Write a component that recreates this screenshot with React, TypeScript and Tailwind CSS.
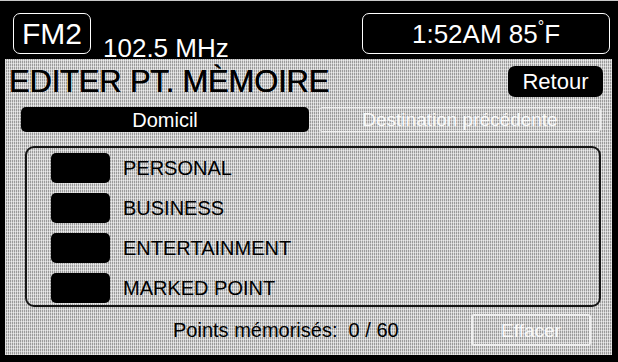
import React from "react";

const dither =
  "bg-[#c8c8c8] bg-[image:repeating-linear-gradient(0deg,rgba(255,255,255,0.45)_0px,rgba(255,255,255,0.45)_1px,transparent_1px,transparent_3px),repeating-linear-gradient(90deg,#9a9a9a_0px,#9a9a9a_1px,#dadada_1px,#dadada_2px)]";

const rows = ["PERSONAL", "BUSINESS", "ENTERTAINMENT", "MARKED POINT"];

export default function App() {
  return (
    <div className="w-[618px] h-[362px] bg-black flex flex-col border-t border-[#c8c8c8] font-['Liberation_Sans',Arial,sans-serif] overflow-hidden">
      {/* Top bar */}
      <div className="h-[58px] flex items-start pt-[12px] pl-[13px] pr-[8px] shrink-0">
        <div className="w-[78px] h-[41px] border-[1.5px] border-white rounded-[7px] flex items-center justify-center text-white text-[30px] leading-none pt-[1px]">
          FM2
        </div>
        <div className="ml-[12px] mt-[22px] text-white text-[26px] leading-none">102.5 MHz</div>
        <div className="ml-auto w-[248px] h-[41px] border-[1.5px] border-white rounded-[7px] flex items-center justify-center text-white text-[26px] leading-none">
          1:52AM 85<span className="relative -top-[7px] text-[16px]">°</span>F
        </div>
      </div>

      {/* Content */}
      <div className={`ml-[5px] mr-[6px] h-[296px] flex flex-col border-l border-[#e0e0e0] ${dither}`}>
        <div className="flex items-start justify-between pt-[7px]">
          <div className="pl-[3px] text-[31px] leading-none text-black tracking-[-0.2px] [text-shadow:0_0_0.4px_#000]">EDITER PT. MÈMOIRE</div>
          <div className="mr-[9px] w-[95px] h-[31px] bg-black rounded-[7px] flex items-center justify-center text-white text-[22px] leading-none">
            Retour
          </div>
        </div>

        <div className="flex mt-[10px] pl-[15px] gap-[10px]">
          <div className="w-[288px] h-[25px] bg-black rounded-[5px] flex items-center justify-center text-white text-[20px] leading-none">
            Domicil
          </div>
          <div className="w-[282px] h-[25px] border-[1.5px] border-[#f4f4f4] rounded-[3px] flex items-center justify-center text-white text-[19px] leading-none opacity-90">
            Destination précédente
          </div>
        </div>

        <div className="mt-[14px] ml-[19px] w-[576px] h-[161px] border-2 border-[#141414] rounded-[9px] pt-[5px] pl-[24px] flex flex-col gap-[10px]">
          {rows.map((r) => (
            <div key={r} className="flex items-center h-[30px]">
              <div className="w-[59px] h-[30px] bg-black rounded-[5px]" />
              <div className="ml-[13px] text-[20px] leading-none text-black">{r}</div>
            </div>
          ))}
        </div>

        <div className="flex items-center mt-[7px]">
          <div className="ml-[167px] text-[20px] leading-none text-black">
            Points mémorisés:&nbsp; 0 / 60
          </div>
          <div className="ml-auto mr-[21px] w-[120px] h-[32px] border-2 border-[#f4f4f4] rounded-[3px] flex items-center justify-center text-white text-[19px] leading-none opacity-90">
            Effacer
          </div>
        </div>
      </div>
    </div>
  );
}
